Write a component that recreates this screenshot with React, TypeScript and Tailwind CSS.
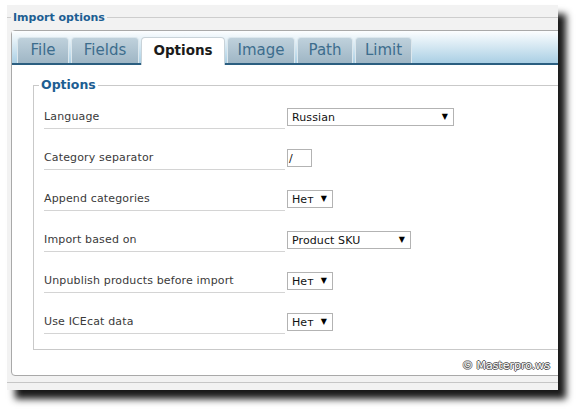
import React from "react";

const tabs = [
  { name: "File", w: "w-[52px]" },
  { name: "Fields", w: "w-[68px]" },
  { name: "Options", w: "w-[84px]", active: true },
  { name: "Image", w: "w-[68px]" },
  { name: "Path", w: "w-[56px]" },
  { name: "Limit", w: "w-[57px]" },
];

function Select({ value, w }: { value: string; w: string }) {
  return (
    <div
      className={`${w} h-[18px] border border-[#b3b3b3] bg-white flex items-center justify-between pl-[4px] pr-[5px] text-[11px] text-[#111] leading-none tracking-[0.1px]`}
    >
      <span>{value}</span>
      <span className="text-[8px] text-black">▼</span>
    </div>
  );
}

const rows: { label: string; control: React.ReactNode }[] = [
  { label: "Language", control: <Select value="Russian" w="w-[167px]" /> },
  {
    label: "Category separator",
    control: (
      <div className="w-[25px] h-[18px] border border-[#b3b3b3] bg-white flex items-center pl-[1px] text-[11px] text-[#111] leading-none">
        /
      </div>
    ),
  },
  { label: "Append categories", control: <Select value="Нет" w="w-[46px]" /> },
  { label: "Import based on", control: <Select value="Product SKU" w="w-[124px]" /> },
  { label: "Unpublish products before import", control: <Select value="Нет" w="w-[46px]" /> },
  { label: "Use ICEcat data", control: <Select value="Нет" w="w-[46px]" /> },
];

export default function App() {
  return (
    <div className="w-[581px] h-[412px] bg-white pl-[7px] pt-[5px] font-['DejaVu_Sans',sans-serif]">
      <div className="relative w-[551px] h-[385px] bg-[#f2f2f2] overflow-hidden shadow-[8px_9px_7px_rgba(0,0,0,0.9)]">
        {/* outer legend */}
        <div className="mt-[5px] h-[15px] flex items-center">
          <div className="w-[4px] border-t border-[#cdcdcd]" />
          <span className="px-[2px] text-[11px] font-bold text-[#1d5e92] leading-none">
            Import options
          </span>
          <div className="flex-1 border-t border-[#cdcdcd]" />
        </div>

        {/* panel */}
        <div className="mt-[5px] ml-[4px] w-[620px] h-[346px] border border-[#a9a9a9] rounded-l-[4px] bg-white">
          <div className="h-[34px] border-b-2 border-[#2b5e80] bg-gradient-to-b from-[#fcfeff] to-[#aacfe4] pl-[5px] pt-[6px] flex items-start gap-[2px]">
            {tabs.map((t) =>
              t.active ? (
                <div
                  key={t.name}
                  className={`${t.w} h-[28px] bg-white border border-b-0 border-[#c9d3d9] rounded-t-[4px] flex items-center justify-center text-[13.5px] font-bold text-[#1b1b1b] pb-[2px]`}
                >
                  {t.name}
                </div>
              ) : (
                <div
                  key={t.name}
                  className={`${t.w} h-[26px] bg-gradient-to-b from-[#bfd1dc] to-[#9fb6c5] border border-b-0 border-[#dce7ed] rounded-t-[4px] flex items-center justify-center text-[15px] text-[#3d6d8d]`}
                >
                  {t.name}
                </div>
              )
            )}
          </div>

          <fieldset className="mt-[12px] ml-[21px] border border-[#c9c9c9] pb-[15px]">
            <legend className="ml-[5px] px-[2px] leading-[16px] text-[12.5px] font-bold text-[#1d5e92]">
              Options
            </legend>
            <div className="-mt-[5px] pl-[10px]">
              {rows.map((r) => (
                <div key={r.label} className="h-[41px] flex items-end">
                  <div className="w-[241px] border-b border-[#d4d4d4] pb-[3px] leading-[16px] text-[11px] text-[#3a3a3a] tracking-[0.15px]">
                    {r.label}
                  </div>
                  <div className="ml-[2px] mb-[3px]">{r.control}</div>
                </div>
              ))}
            </div>
          </fieldset>
        </div>

        <div className="mt-[6px] border-t border-[#c6c6c6]" />

        <div className="absolute right-[8px] top-[355px] text-[11px] leading-none text-white [text-shadow:1px_0_#5a5a5a,-1px_0_#5a5a5a,0_1px_#5a5a5a,0_-1px_#5a5a5a]">
          © Masterpro.ws
        </div>
      </div>
    </div>
  );
}
